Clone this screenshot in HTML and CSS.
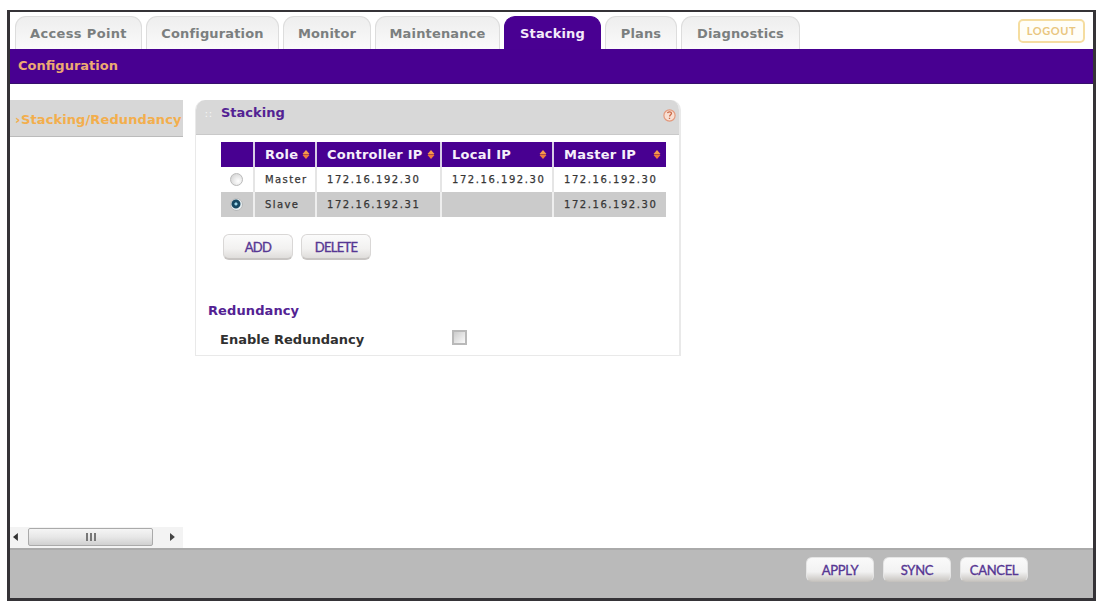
FILE: index.html
```html
<!DOCTYPE html>
<html lang="en">
<head>
<meta charset="utf-8">
<title>Stacking</title>
<link rel="stylesheet" href="styles.css">
</head>
<body>
<div class="frame">
  <header class="top">
    <nav class="tabs">
      <a class="tab t-access">Access Point</a>
      <a class="tab t-config">Configuration</a>
      <a class="tab t-monitor">Monitor</a>
      <a class="tab t-maint">Maintenance</a>
      <a class="tab t-stack active">Stacking</a>
      <a class="tab t-plans">Plans</a>
      <a class="tab t-diag">Diagnostics</a>
    </nav>
    <a class="logout">LOGOUT</a>
  </header>
  <div class="subnav">Configuration</div>
  <div class="content">
    <aside class="side">
      <div class="side-item"><span class="chev">›</span><span>Stacking/Redundancy</span></div>
      <div class="scroll">
        <svg class="arrow" width="5" height="8" viewBox="0 0 5 8"><path d="M5 0v8L0 4z" fill="#333"/></svg>
        <div class="thumb"><i></i><i></i><i></i></div>
        <svg class="arrow right" width="5" height="8" viewBox="0 0 5 8"><path d="M0 0v8l5-4z" fill="#444"/></svg>
      </div>
    </aside>
    <main class="panel">
      <div class="panel-head">
        <span class="grip">∷</span>
        <h2>Stacking</h2>
        <svg class="help" width="13" height="13" viewBox="0 0 13 13"><circle cx="6.500" cy="6.500" r="5.600" fill="#f8dfd3" stroke="#e39a7e" stroke-width="1.200"/><path d="M4.500 4.200c.2-1.700 4-1.600 4 0 0 1.500-1.900 1.400-1.900 3.300M6.500 8.700v1.300" fill="none" stroke="#cb6a48" stroke-width="1.300"/></svg>
      </div>
      <table class="grid">
        <colgroup><col class="c1"><col class="c2"><col class="c3"><col class="c4"><col class="c5"></colgroup>
        <tr>
          <th></th>
          <th><div class="th">Role<svg class="sort" width="8" height="9" viewBox="0 0 8 9"><path d="M4 0l3.500 4h-7z" fill="#f59a4c"/><path d="M.5 5h7L4 9z" fill="#ef7b3c"/><path d="M1 4h6v1H1z" fill="#b04a4c"/></svg></div></th>
          <th><div class="th">Controller IP<svg class="sort" width="8" height="9" viewBox="0 0 8 9"><path d="M4 0l3.500 4h-7z" fill="#f59a4c"/><path d="M.5 5h7L4 9z" fill="#ef7b3c"/><path d="M1 4h6v1H1z" fill="#b04a4c"/></svg></div></th>
          <th><div class="th">Local IP<svg class="sort" width="8" height="9" viewBox="0 0 8 9"><path d="M4 0l3.500 4h-7z" fill="#f59a4c"/><path d="M.5 5h7L4 9z" fill="#ef7b3c"/><path d="M1 4h6v1H1z" fill="#b04a4c"/></svg></div></th>
          <th><div class="th">Master IP<svg class="sort" width="8" height="9" viewBox="0 0 8 9"><path d="M4 0l3.500 4h-7z" fill="#f59a4c"/><path d="M.5 5h7L4 9z" fill="#ef7b3c"/><path d="M1 4h6v1H1z" fill="#b04a4c"/></svg></div></th>
        </tr>
        <tr>
          <td class="pick"><span class="radio"></span></td>
          <td class="role">Master</td><td>172.16.192.30</td><td>172.16.192.30</td><td>172.16.192.30</td>
        </tr>
        <tr class="sel">
          <td class="pick"><span class="radio on"></span></td>
          <td class="role">Slave</td><td>172.16.192.31</td><td></td><td>172.16.192.30</td>
        </tr>
      </table>
      <div class="actions"><span class="btn">ADD</span><span class="btn">DELETE</span></div>
      <h3>Redundancy</h3>
      <div class="field"><span class="label">Enable Redundancy</span><span class="check"></span></div>
    </main>
  </div>
  <footer class="foot"><span class="btn">APPLY</span><span class="btn">SYNC</span><span class="btn">CANCEL</span></footer>
</div>
</body>
</html>
```
FILE: styles.css
```css
* { box-sizing: border-box; }
body { margin: 0; background: #fff; font-family: "DejaVu Sans", Verdana, sans-serif; }
.frame { width: 1089px; height: 591px; margin: 10px 0 0 7px; border: 3px solid #353337; border-top-width: 2px; display: flex; flex-direction: column; background: #fff; }
.top { height: 37px; display: flex; justify-content: space-between; padding: 4px 8px 0 5px; }
.tabs { display: flex; gap: 4px; }
.tab { height: 33px; border: 1px solid #ddd; border-bottom: 0; border-radius: 11px 11px 0 0; background: linear-gradient(#eee, #f5f5f5 60%, #fbfbfb); color: #7b7f7f; font-weight: bold; font-size: 13px; line-height: 34px; letter-spacing: .15px; text-align: center; white-space: nowrap; }
.t-access { width: 127px; letter-spacing: .35px; }
.t-config { width: 133px; }
.t-monitor { width: 88px; }
.t-maint { width: 125px; }
.t-stack { width: 97px; }
.t-plans { width: 72px; }
.t-diag { width: 119px; }
.tab.active { background: #490092; border-color: #490092; color: #f4eafa; }
.logout { width: 67px; height: 24px; margin-top: 3px; border: 2px solid #f5dda0; border-radius: 5px; background: #fffef8; color: #e9c67f; font: bold 11px/20px Lato, sans-serif; letter-spacing: .6px; text-align: center; }
.subnav { height: 35px; background: #480091; border-bottom: 1px solid #36106c; color: #edaa72; font-weight: bold; font-size: 13px; line-height: 33px; padding-left: 8px; }
.content { flex: 1; display: flex; gap: 12px; padding-top: 16px; }
.side { width: 173px; display: flex; flex-direction: column; justify-content: space-between; }
.side-item { height: 37px; background: #d7d7d7; border-bottom: 1px solid #bbb; color: #f3ae4c; font-weight: bold; font-size: 13px; line-height: 40px; letter-spacing: .1px; padding-left: 5px; display: flex; white-space: nowrap; }
.chev { width: 6px; }
.scroll { height: 21px; background: #f3f3f3; display: flex; align-items: center; padding: 0 8px 2px 3px; }
.thumb { width: 128px; height: 18px; margin-left: 10px; border: 1px solid #aaa; border-radius: 2px; background: linear-gradient(#f5f5f5, #e7e7e7 50%, #d0d0d0); display: flex; gap: 2px; justify-content: center; align-items: center; }
.thumb i { width: 2px; height: 8px; background: #777; }
.right { margin-left: 17px; }
.panel { width: 486px; height: 256px; border: 1px solid #e9e9e9; border-right-width: 2px; border-top: 0; border-radius: 10px 10px 0 0; overflow: hidden; }
.panel-head { height: 35px; background: #d8d8d8; border-bottom: 1px solid #c9c9c9; display: flex; padding: 0 3px 0 9px; }
.grip { width: 16px; color: #f6f6f6; font-size: 10px; line-height: 29px; }
h2, h3 { margin: 0; font-size: 13px; color: #532293; }
h2 { line-height: 26px; flex: 1; }
.help { margin-top: 9px; }
.grid { width: 445px; margin: 7px 0 0 25px; border-collapse: collapse; table-layout: fixed; }
.c1 { width: 33px; }
.c2 { width: 62px; }
.c3 { width: 125px; }
.c4 { width: 112px; }
.c5 { width: 113px; }
th { height: 25px; padding: 0 5px 0 10px; background: #480091; border-left: 2px solid #d8cde6; color: #f6effb; font-size: 13px; letter-spacing: .25px; text-align: left; white-space: nowrap; }
th:first-child, td:first-child { border-left: 0; }
.th { display: flex; justify-content: space-between; align-items: center; }
.sort { flex: none; }
td { height: 25px; padding: 0 0 0 10px; border-left: 2px solid #e5e5e5; color: #363636; font-size: 10px; -webkit-text-stroke: .25px #363636; letter-spacing: 1.55px; white-space: nowrap; }
.role { letter-spacing: 1.4px; }
.sel td { background: #cbcbcb; border-left-color: #eee; }
.pick { padding: 0 0 0 9px; }
.radio { display: block; width: 13px; height: 13px; border: 1px solid #bbb; border-radius: 50%; background: radial-gradient(circle at 65% 65%, #fff, #ccc); }
.radio.on { background: radial-gradient(circle at 45% 45%, #9ed8ec 0 1px, #174963 2px 4px, #e5edf0 5px); }
.actions { display: flex; gap: 8px; margin: 17px 0 0 27px; }
.btn { width: 70px; height: 26px; border: 1px solid #d9d7d6; border-bottom: 2px solid #c8c5c3; border-radius: 6px; background: linear-gradient(#fbfbfb, #f2f1f0 60%, #dfdddb); color: #563693; font: 13px/25px Lato, sans-serif; -webkit-text-stroke: .35px #563693; letter-spacing: -.7px; text-align: center; }
h3 { margin: 42px 0 0 12px; line-height: 18px; letter-spacing: .1px; }
.field { display: flex; align-items: center; height: 20px; margin: 9px 0 0 24px; }
.label { width: 232px; color: #303030; font-weight: bold; font-size: 13px; }
.check { width: 15px; height: 15px; margin-top: -4px; border: 2px solid #b9b9b9; background: linear-gradient(135deg, #ccc, #fafafa); }
.foot { height: 50px; background: #bababa; border-top: 2px solid #aaa; display: flex; gap: 9px; justify-content: flex-end; padding: 7px 65px 0 0; }
.foot .btn { width: 68px; height: 25px; border-color: #e5e5e5; border-bottom: 1px solid #c5c2be; background: linear-gradient(#fafafa, #f2f2f2 60%, #c9c6c2); line-height: 24px; letter-spacing: -.3px; }
```
